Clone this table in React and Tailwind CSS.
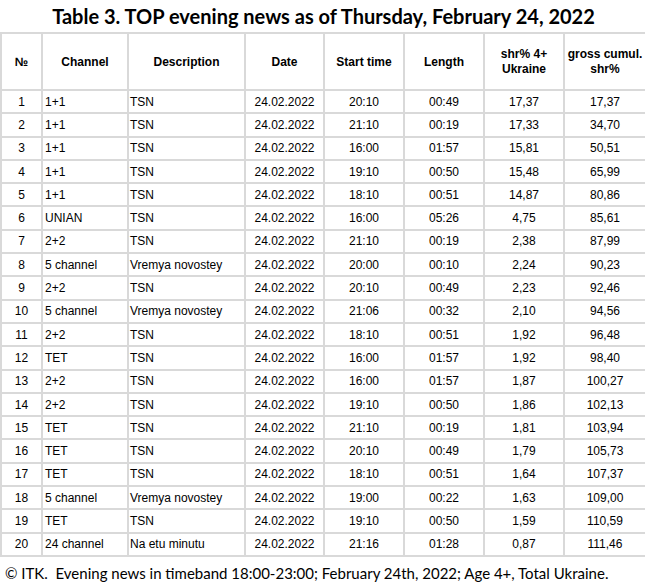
const rows = [
  ["1", "1+1", "TSN", "24.02.2022", "20:10", "00:49", "17,37", "17,37"],
  ["2", "1+1", "TSN", "24.02.2022", "21:10", "00:19", "17,33", "34,70"],
  ["3", "1+1", "TSN", "24.02.2022", "16:00", "01:57", "15,81", "50,51"],
  ["4", "1+1", "TSN", "24.02.2022", "19:10", "00:50", "15,48", "65,99"],
  ["5", "1+1", "TSN", "24.02.2022", "18:10", "00:51", "14,87", "80,86"],
  ["6", "UNIAN", "TSN", "24.02.2022", "16:00", "05:26", "4,75", "85,61"],
  ["7", "2+2", "TSN", "24.02.2022", "21:10", "00:19", "2,38", "87,99"],
  ["8", "5 channel", "Vremya novostey", "24.02.2022", "20:00", "00:10", "2,24", "90,23"],
  ["9", "2+2", "TSN", "24.02.2022", "20:10", "00:49", "2,23", "92,46"],
  ["10", "5 channel", "Vremya novostey", "24.02.2022", "21:06", "00:32", "2,10", "94,56"],
  ["11", "2+2", "TSN", "24.02.2022", "18:10", "00:51", "1,92", "96,48"],
  ["12", "TET", "TSN", "24.02.2022", "16:00", "01:57", "1,92", "98,40"],
  ["13", "2+2", "TSN", "24.02.2022", "16:00", "01:57", "1,87", "100,27"],
  ["14", "2+2", "TSN", "24.02.2022", "19:10", "00:50", "1,86", "102,13"],
  ["15", "TET", "TSN", "24.02.2022", "21:10", "00:19", "1,81", "103,94"],
  ["16", "TET", "TSN", "24.02.2022", "20:10", "00:49", "1,79", "105,73"],
  ["17", "TET", "TSN", "24.02.2022", "18:10", "00:51", "1,64", "107,37"],
  ["18", "5 channel", "Vremya novostey", "24.02.2022", "19:00", "00:22", "1,63", "109,00"],
  ["19", "TET", "TSN", "24.02.2022", "19:10", "00:50", "1,59", "110,59"],
  ["20", "24 channel", "Na etu minutu", "24.02.2022", "21:16", "01:28", "0,87", "111,46"],
];

const cell =
  "border-2 border-[#d9d9d9] p-0 font-['Liberation_Sans',Arial,sans-serif] text-[12px]";

export default function App() {
  return (
    <div className="w-[645px] h-[588px] bg-white text-black overflow-hidden">
      <div className="h-[32px] pt-[4px] text-center text-[20px] font-bold leading-[24px] pl-[2px] font-['Lato','Open_Sans',sans-serif]">
        Table 3. TOP evening news as of Thursday, February 24, 2022
      </div>
      <table className="border-collapse table-fixed w-[645px] leading-[14px] font-['Liberation_Sans',Arial,sans-serif]">
        <colgroup>
          <col className="w-[41px]" />
          <col className="w-[86px]" />
          <col className="w-[117px]" />
          <col className="w-[79px]" />
          <col className="w-[80px]" />
          <col className="w-[80px]" />
          <col className="w-[80px]" />
          <col className="w-[82px]" />
        </colgroup>
        <thead>
          <tr className="h-[57px]">
            <th className={cell + " font-bold text-center"}>№</th>
            <th className={cell + " font-bold text-center"}>Channel</th>
            <th className={cell + " font-bold text-center"}>Description</th>
            <th className={cell + " font-bold text-center"}>Date</th>
            <th className={cell + " font-bold text-center"}>Start time</th>
            <th className={cell + " font-bold text-center"}>Length</th>
            <th className={cell + " font-bold text-center leading-[15px]"}>
              shr% 4+
              <br />
              Ukraine
            </th>
            <th className={cell + " font-bold text-center leading-[15px]"}>
              gross cumul.
              <br />
              shr%
            </th>
          </tr>
        </thead>
        <tbody>
          {rows.map((r) => (
            <tr key={r[0]} className="h-[23.3px]">
              <td className={cell + " text-center"}>{r[0]}</td>
              <td className={cell + " text-left pl-[2px]"}>{r[1]}</td>
              <td className={cell + " text-left pl-[1px]"}>{r[2]}</td>
              <td className={cell + " text-center"}>{r[3]}</td>
              <td className={cell + " text-center"}>{r[4]}</td>
              <td className={cell + " text-center"}>{r[5]}</td>
              <td className={cell + " text-center"}>{r[6]}</td>
              <td className={cell + " text-center"}>{r[7]}</td>
            </tr>
          ))}
        </tbody>
      </table>
      <div className="pl-[5px] pt-[6px] text-[15px] leading-[20px] whitespace-nowrap font-['Lato','Open_Sans',sans-serif]">
        © ITK.&nbsp; Evening news in timeband 18:00-23:00; February 24th, 2022; Age 4+, Total Ukraine.
      </div>
    </div>
  );
}
